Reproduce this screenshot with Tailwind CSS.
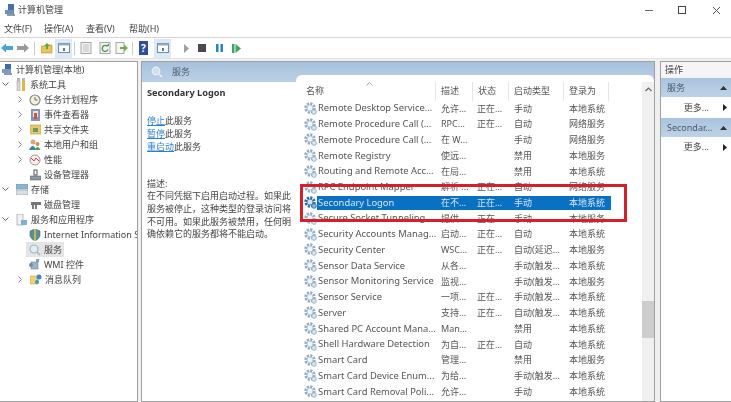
<!DOCTYPE html>
<html lang="zh-CN">
<head>
  <meta charset="UTF-8" />
  <title>计算机管理</title>
  <script src="https://cdn.jsdelivr.net/npm/@tailwindcss/browser@4"></script>
</head>
<body class="w-[731px] h-[402px] overflow-hidden bg-white text-[#333] text-[9px] font-['Noto_Sans','Noto_Sans_CJK_SC',sans-serif]">
  <svg class="hidden">
    <defs>
      <g id="gear">
        <circle cx="6" cy="6" r="4.400" fill="none" stroke="#8fadc4" stroke-width="2.600" stroke-dasharray="2.200 1.200"/>
        <circle cx="6" cy="6" r="3" fill="#eef4f8" stroke="#a9bfd0" stroke-width=".8"/>
        <circle cx="10" cy="10" r="2.300" fill="#dbe7f0" stroke="#8fadc4" stroke-width=".9"/>
      </g>
      <g id="gear-on">
        <circle cx="6" cy="6" r="4.400" fill="none" stroke="#2f6ea5" stroke-width="2.600" stroke-dasharray="2.200 1.200"/>
        <circle cx="6" cy="6" r="3" fill="#cfe2f1" stroke="#2f6ea5" stroke-width=".8"/>
        <circle cx="10" cy="10" r="2.300" fill="#8db8da" stroke="#2f6ea5" stroke-width=".9"/>
      </g>
    </defs>
  </svg>

  <div class="relative w-[731px] h-[402px] overflow-hidden blur-[0.5px]">
    <!-- Title bar -->
    <header class="flex items-center h-[20px] pl-[5px]">
      <svg width="11" height="13" viewBox="0 0 11 13"><rect x="3" y="0" width="6" height="6" fill="#4a6fa5"/><rect x="0" y="6" width="9" height="4" fill="#6d8fb3"/><rect x="2" y="10" width="8" height="2" fill="#8a9bb0"/></svg>
      <span class="ml-[2px] text-[#444]">计算机管理</span>
      <div class="ml-auto flex items-center">
        <span class="w-[8px] h-px bg-[#666] mr-[25px]"></span>
        <span class="w-[8px] h-[8px] border border-[#444] mr-[26px]"></span>
        <svg class="mr-[10px]" width="9" height="9" viewBox="0 0 9 9"><path d="M1 1l7 7M8 1l-7 7" stroke="#555" stroke-width="1"/></svg>
      </div>
    </header>

    <!-- Menu -->
    <nav class="flex h-[18px] items-center pl-[4px] pt-[1px] text-[#444] border-b border-[#d5d5d5]">
      <span class="w-[40px]">文件(F)</span>
      <span class="w-[42px]">操作(A)</span>
      <span class="w-[43px]">查看(V)</span>
      <span>帮助(H)</span>
    </nav>

    <!-- Toolbar -->
    <div class="flex items-center h-[20px] text-[#777]">
      <svg class="ml-[1px]" width="12" height="10" viewBox="0 0 12 10"><path d="M0 5l5-4.500v2.500h7v4h-7v2.500z" fill="#4aa3d8"/></svg>
      <svg class="ml-[4px]" width="12" height="10" viewBox="0 0 12 10"><path d="M12 5l-5-4.500v2.500h-7v4h7v2.500z" fill="#9a9a9a"/></svg>
      <span class="ml-[5px] w-px h-[13px] bg-[#ccc]"></span>
      <svg class="ml-[6px]" width="12" height="12" viewBox="0 0 12 12"><path d="M0 4h5l1-1h5v8h-11z" fill="#e7c65c" stroke="#b58d2a" stroke-width=".6"/><path d="M6 1l3 3h-2v3h-2v-3h-2z" fill="#5aa84c"/></svg>
      <span class="ml-[2px] w-[17px] h-[19px] bg-[#dce8f3] flex items-center justify-center"><svg width="12" height="10" viewBox="0 0 12 10"><rect x=".5" y=".5" width="11" height="9" fill="#fff" stroke="#6e8ca3"/><rect x=".5" y=".5" width="11" height="2" fill="#8fb0c9"/><rect x="5" y="5" width="2" height="3" fill="#5c7c92"/></svg></span>
      <span class="ml-[2px] w-px h-[13px] bg-[#ccc]"></span>
      <svg class="ml-[5px]" width="12" height="12" viewBox="0 0 12 12"><rect x="1" y=".5" width="10" height="11" fill="#f2f2f2" stroke="#a8a8a8"/><path d="M3 3h6M3 5h6M3 7h6M3 9h6" stroke="#c0c0c0"/></svg>
      <svg class="ml-[7px]" width="12" height="12" viewBox="0 0 12 12"><rect x="1" y=".5" width="10" height="11" fill="#f4f4f4" stroke="#a8a8a8"/><path d="M8.500 4.500a3 3 0 1 0 .5 3" fill="none" stroke="#3e9c48" stroke-width="1.300"/><path d="M7 4h3v-2.500z" fill="#3e9c48"/></svg>
      <svg class="ml-[4px]" width="13" height="12" viewBox="0 0 13 12"><rect x="1" y=".5" width="8" height="11" fill="#f4f4f4" stroke="#a8a8a8"/><path d="M5 5h4v-2.500l4 3.500-4 3.500v-2.500h-4z" fill="#6cb04a"/></svg>
      <span class="ml-[4px] w-px h-[13px] bg-[#ccc]"></span>
      <span class="ml-[6px] w-[9px] h-[14px] bg-[#2e4f9e] text-white text-[10px] font-bold flex items-center justify-center">?</span>
      <span class="ml-[6px] w-[17px] h-[19px] bg-[#dce8f3] flex items-center justify-center"><svg width="12" height="10" viewBox="0 0 12 10"><rect x=".5" y=".5" width="11" height="9" fill="#fff" stroke="#6e8ca3"/><rect x=".5" y=".5" width="11" height="2" fill="#8fb0c9"/><rect x="5" y="5" width="2" height="3" fill="#5c7c92"/></svg></span>
      <svg class="ml-[12px]" width="7" height="9" viewBox="0 0 7 9"><path d="M1 0l5 4.500-5 4.500z" fill="#9aa0a4"/></svg>
      <span class="ml-[8px] w-[8px] h-[8px] bg-[#4a4a4a]"></span>
      <svg class="ml-[10px]" width="7" height="8" viewBox="0 0 7 8"><path d="M0 0h2.500v8h-2.500zM4.500 0h2.500v8h-2.500z" fill="#2f83c5"/></svg>
      <svg class="ml-[9px]" width="9" height="9" viewBox="0 0 9 9"><path d="M0 0h2.500v9h-2.500zM3.500 0l5.500 4.500-5.500 4.500z" fill="#3ea55a"/></svg>
    </div>

    <!-- Main area -->
    <div class="flex h-[344px] bg-[#f0f0f0] pt-[2px] border-t border-[#e3e3e3]">
      <!-- Tree -->
      <aside class="w-[138px] h-full bg-white border border-[#a0a0a0] border-l-0 text-[#444] leading-[15px] overflow-hidden">
        <div class="flex items-center h-[15px] pl-[2px]"><svg class="mr-[2px]" width="12" height="12" viewBox="0 0 12 12"><rect x="3" y="0" width="6" height="5" fill="#3f6aa3"/><rect x="0" y="5" width="9" height="4" fill="#7b9cbd"/><rect x="2" y="9" width="8" height="2" fill="#8a9bb0"/></svg>计算机管理(本地)</div>
        <div class="flex items-center h-[15px] pl-[2px]"><svg class="mr-[7px]" width="7" height="5" viewBox="0 0 7 5"><path d="M.5.500l3 3 3-3" fill="none" stroke="#666"/></svg><svg class="mr-[4px]" width="10" height="13" viewBox="0 0 10 13"><rect x="1" y="3" width="3" height="10" fill="#d7d7d7" stroke="#999" stroke-width=".5"/><rect x="6" y="3" width="3" height="10" fill="#e0b93e"/><path d="M1 0h3v3h-3zM6 0h3v3h-3z" fill="#b8b8b8"/></svg>系统工具</div>
        <div class="flex items-center h-[15px] pl-[18px]"><svg class="mr-[6px]" width="5" height="7" viewBox="0 0 5 7"><path d="M.5.500l3 3-3 3" fill="none" stroke="#888"/></svg><svg class="mr-[3px]" width="12" height="12" viewBox="0 0 12 12"><circle cx="6" cy="6" r="5" fill="#f3f0e2" stroke="#8c8c78" stroke-width="1.200"/><path d="M6 3v3h2.500" fill="none" stroke="#666"/></svg>任务计划程序</div>
        <div class="flex items-center h-[15px] pl-[18px]"><svg class="mr-[7px]" width="5" height="7" viewBox="0 0 5 7"><path d="M.5.500l3 3-3 3" fill="none" stroke="#888"/></svg><svg class="mr-[3px]" width="11" height="12" viewBox="0 0 11 12"><rect x="1" y="0" width="9" height="12" fill="#8d8fbc"/><rect x="3" y="2" width="5" height="6" fill="#f0e7c4"/><rect x="4" y="4" width="3" height="6" fill="#c0574e"/></svg>事件查看器</div>
        <div class="flex items-center h-[15px] pl-[18px]"><svg class="mr-[7px]" width="5" height="7" viewBox="0 0 5 7"><path d="M.5.500l3 3-3 3" fill="none" stroke="#888"/></svg><svg class="mr-[3px]" width="11" height="11" viewBox="0 0 11 11"><rect x="0" y="1" width="11" height="9" fill="#e8c96a" stroke="#b9983c" stroke-width=".6"/><rect x="3" y="4" width="5" height="4" fill="#6c9a5a"/></svg>共享文件夹</div>
        <div class="flex items-center h-[15px] pl-[18px]"><svg class="mr-[6px]" width="5" height="7" viewBox="0 0 5 7"><path d="M.5.500l3 3-3 3" fill="none" stroke="#888"/></svg><svg class="mr-[3px]" width="12" height="12" viewBox="0 0 12 12"><circle cx="4" cy="3" r="2.500" fill="#d9a877"/><path d="M0 11q4-8 7 0z" fill="#3a7cb8"/><circle cx="8.500" cy="5" r="2" fill="#c58f62"/><path d="M5.500 11q3-6 6 0z" fill="#4c9b59"/></svg>本地用户和组</div>
        <div class="flex items-center h-[15px] pl-[18px]"><svg class="mr-[6px]" width="5" height="7" viewBox="0 0 5 7"><path d="M.5.500l3 3-3 3" fill="none" stroke="#888"/></svg><svg class="mr-[3px]" width="12" height="12" viewBox="0 0 12 12"><circle cx="6" cy="6" r="5" fill="#f6f0ee" stroke="#b98a8a"/><path d="M2 4l3 3 2-3 3 3" fill="none" stroke="#c8404a"/></svg>性能</div>
        <div class="flex items-center h-[15px] pl-[30px]"><svg class="mr-[3px]" width="11" height="12" viewBox="0 0 11 12"><rect x="4" y="1" width="3" height="5" fill="none" stroke="#555"/><rect x="0" y="7" width="11" height="4" fill="#8d99a5" stroke="#555" stroke-width=".5"/></svg>设备管理器</div>
        <div class="flex items-center h-[15px] pl-[2px]"><svg class="mr-[7px]" width="7" height="5" viewBox="0 0 7 5"><path d="M.5.500l3 3 3-3" fill="none" stroke="#666"/></svg><svg class="mr-[3px]" width="12" height="11" viewBox="0 0 12 11"><rect x="0" y="0" width="12" height="5" fill="#8bb4cf" stroke="#7b8b99" stroke-width=".5"/><rect x="0" y="6" width="12" height="5" fill="#d7dfe6" stroke="#7b8b99" stroke-width=".5"/></svg>存储</div>
        <div class="flex items-center h-[15px] pl-[30px]"><svg class="mr-[2px]" width="12" height="10" viewBox="0 0 12 10"><path d="M1 2h10v3h-10z" fill="#777"/><path d="M3 5v4M6 5v4" stroke="#555" stroke-width="1.500"/></svg>磁盘管理</div>
        <div class="flex items-center h-[15px] pl-[2px]"><svg class="mr-[7px]" width="7" height="5" viewBox="0 0 7 5"><path d="M.5.500l3 3 3-3" fill="none" stroke="#666"/></svg><svg class="mr-[4px]" width="11" height="12" viewBox="0 0 11 12"><rect x="1" y="0" width="6" height="11" fill="#f1f1f1" stroke="#9aa3aa" stroke-width=".7"/><rect x="5" y="6" width="6" height="5" fill="#7fb0d2"/></svg>服务和应用程序</div>
        <div class="flex items-center h-[15px] pl-[29px] whitespace-nowrap"><svg class="mr-[3px] shrink-0" width="12" height="12" viewBox="0 0 12 12"><path d="M1 2l5-2 5 2v5q-1 3-5 5-4-2-5-5z" fill="#5f8f86" stroke="#3e6a8a" stroke-width=".6"/><path d="M6 0v12" stroke="#d6c46c" stroke-width="1.500"/></svg>Internet Information S</div>
        <div class="flex items-center h-[15px] pl-[26px]"><span class="flex items-center h-[15px] bg-[#e4e4e4] pl-[3px] pr-[2px]"><svg class="mr-[3px]" width="12" height="12" viewBox="0 0 12 12"><circle cx="5" cy="5" r="4" fill="#e2edf3" stroke="#9fb9c9" stroke-width="1.200"/><path d="M8 8l3 3" stroke="#9fb9c9" stroke-width="1.500"/></svg>服务</span></div>
        <div class="flex items-center h-[15px] pl-[28px]"><svg class="mr-[3px]" width="13" height="11" viewBox="0 0 13 11"><rect x="3" y="3" width="7" height="7" fill="#9db5c6" stroke="#6f8697" stroke-width=".6"/><circle cx="3" cy="6" r="2" fill="#6f8fa8"/><path d="M8 0h3v3h-3z" fill="#7aa3c4"/></svg>WMI 控件</div>
        <div class="flex items-center h-[15px] pl-[18px]"><svg class="mr-[7px]" width="5" height="7" viewBox="0 0 5 7"><path d="M.5.500l3 3-3 3" fill="none" stroke="#888"/></svg><svg class="mr-[3px]" width="12" height="11" viewBox="0 0 12 11"><rect x="0" y="2" width="8" height="8" fill="#efd274" stroke="#b9983c" stroke-width=".5"/><circle cx="9" cy="3" r="2.500" fill="#3c86c6"/><circle cx="7" cy="8" r="2" fill="#3c9bb8"/></svg>消息队列</div>
      </aside>

      <!-- Centre panel -->
      <section class="ml-[3px] w-[514px] h-full bg-white border border-[#a0a0a0] flex flex-col">
        <div class="h-[20px] shrink-0 bg-gradient-to-b from-[#a6c1dd] to-[#bcd0e5] flex items-center pl-[9px] text-[#54616e]">
          <svg class="mr-[9px]" width="12" height="12" viewBox="0 0 12 12"><circle cx="5" cy="5" r="3.800" fill="#d2e0ec" stroke="#e8f0f6" stroke-width="1.200"/><path d="M8 8l3 3" stroke="#e8f0f6" stroke-width="1.500"/></svg>服务
        </div>
        <div class="flex flex-1 min-h-0 relative">
          <!-- Description -->
          <div class="w-[154px] shrink-0 pl-[5px] pt-[4px] leading-[13px] text-[#444]">
            <p class="font-bold text-[#333] text-[9.200px]">Secondary Logon</p>
            <p class="mt-[15px]"><span class="text-[#2d7fd0] underline">停止</span>此服务</p>
            <p><span class="text-[#2d7fd0] underline">暂停</span>此服务</p>
            <p><span class="text-[#2d7fd0] underline">重启动</span>此服务</p>
            <p class="mt-[24px]">描述:</p>
            <p class="w-[146px] leading-[12.750px]">在不同凭据下启用启动过程。如果此服务被停止，这种类型的登录访问将不可用。如果此服务被禁用，任何明确依赖它的服务都将不能启动。</p>
          </div>
          <!-- Service list -->
          <div class="flex-1 min-w-0 relative">
            <div class="absolute -top-[7px] left-0 right-0 h-[8px] bg-white rounded-t-[6px]"></div>
            <div class="relative flex h-[18.500px] text-[#555] leading-[17px]">
              <span class="w-[140px] pl-[10px] border-r border-[#e5e5e5] relative">名称<svg class="absolute left-[70px] top-0" width="7" height="4" viewBox="0 0 7 4"><path d="M.5 3.500l3-3 3 3" fill="none" stroke="#aaa"/></svg></span>
              <span class="w-[37px] pl-[5px] border-r border-[#e5e5e5]">描述</span>
              <span class="w-[36px] pl-[5px] border-r border-[#e5e5e5]">状态</span>
              <span class="w-[55px] pl-[5px] border-r border-[#e5e5e5]">启动类型</span>
              <span class="w-[45px] pl-[5px] border-r border-[#e5e5e5]">登录为</span>
            </div>
            <div id="service-list" class="text-[#555]"></div>
            <!-- Scrollbar -->
            <div class="absolute top-0 bottom-0 right-0 w-[12px] bg-[#f0f0f0]">
              <svg class="absolute top-[5px] left-[3px]" width="7" height="5" viewBox="0 0 7 5"><path d="M.5 4l3-3 3 3" fill="none" stroke="#666" stroke-width="1.200"/></svg>
              <div class="absolute top-[219px] left-0 w-[12px] h-[37px] bg-[#cdcdcd]"></div>
            </div>
          </div>
        </div>
      </section>

      <!-- Actions panel -->
      <aside class="ml-[5px] flex-1 h-full bg-white border border-[#a0a0a0] border-r-0 text-[#444]">
        <div class="h-[16px] pl-[4px] leading-[15px] bg-[#f5f5f5]">操作</div>
        <div class="h-[19px] flex items-center justify-between pl-[6px] pr-[4px] bg-gradient-to-b from-[#a9c4df] to-[#bed2e6] text-[#4a5a6a]">服务<svg width="7" height="4" viewBox="0 0 7 4"><path d="M0 4l3.500-4 3.500 4z" fill="#333"/></svg></div>
        <div class="h-[21px] flex items-center justify-end pr-[4px]">更多...<svg class="ml-[14px]" width="4" height="7" viewBox="0 0 4 7"><path d="M0 0l4 3.500-4 3.500z" fill="#222"/></svg></div>
        <div class="h-[19px] flex items-center justify-between pl-[6px] pr-[4px] bg-gradient-to-b from-[#a9c4df] to-[#bed2e6] text-[#4a5a6a]">Secondar...<svg width="7" height="4" viewBox="0 0 7 4"><path d="M0 4l3.500-4 3.500 4z" fill="#333"/></svg></div>
        <div class="h-[20px] flex items-center justify-end pr-[4px]">更多...<svg class="ml-[14px]" width="4" height="7" viewBox="0 0 4 7"><path d="M0 0l4 3.500-4 3.500z" fill="#222"/></svg></div>
      </aside>
    </div>

    <!-- Red callout drawn over the list -->
    <div class="absolute left-[300px] top-[184px] w-[327px] h-[38px] border-[3px] border-[#d4202c]"></div>
  </div>

  <script>
    const services = [
      ["Remote Desktop Service...", "允许...", "正在...", "手动", "本地系统"],
      ["Remote Procedure Call (...", "RPC...", "正在...", "自动", "网络服务"],
      ["Remote Procedure Call (...", "在 W...", "", "手动", "网络服务"],
      ["Remote Registry", "使远...", "", "禁用", "本地服务"],
      ["Routing and Remote Acc...", "在局...", "", "禁用", "本地系统"],
      ["RPC Endpoint Mapper", "解析 ...", "正在...", "自动", "网络服务"],
      ["Secondary Logon", "在不...", "正在...", "手动", "本地系统"],
      ["Secure Socket Tunneling...", "提供...", "正在...", "手动", "本地服务"],
      ["Security Accounts Manag...", "启动...", "正在...", "自动", "本地系统"],
      ["Security Center", "WSC...", "正在...", "自动(延迟...", "本地服务"],
      ["Sensor Data Service", "从各...", "", "手动(触发...", "本地系统"],
      ["Sensor Monitoring Service", "监视...", "", "手动(触发...", "本地服务"],
      ["Sensor Service", "一项...", "正在...", "手动(触发...", "本地系统"],
      ["Server", "支持...", "正在...", "自动(触发...", "本地系统"],
      ["Shared PC Account Mana...", "Man...", "", "禁用", "本地系统"],
      ["Shell Hardware Detection", "为自...", "正在...", "自动", "本地系统"],
      ["Smart Card", "管理...", "", "禁用", "本地服务"],
      ["Smart Card Device Enum...", "为给...", "", "手动(触发...", "本地系统"],
      ["Smart Card Removal Poli...", "允许...", "", "手动", "本地系统"]
    ];

    document.getElementById("service-list").innerHTML = services.map((s) => {
      const selected = s[0] === "Secondary Logon";
      return `
        <div class="flex items-center h-[15.740px]">
          <svg class="ml-[8px] shrink-0" width="13" height="13"><use href="#${selected ? "gear-on" : "gear"}"/></svg>
          <div class="flex items-center h-[14.500px] w-[294px] pl-[1px] ${selected ? "bg-[#0a70c2] text-[#d7e6f2]" : ""}">
            <span class="w-[123px] shrink-0 whitespace-nowrap overflow-hidden text-[9.400px]">${s[0]}</span>
            <span class="w-[36px] shrink-0 whitespace-nowrap">${s[1]}</span>
            <span class="w-[37px] shrink-0 whitespace-nowrap">${s[2]}</span>
            <span class="w-[55px] shrink-0 whitespace-nowrap">${s[3]}</span>
            <span class="whitespace-nowrap">${s[4]}</span>
          </div>
        </div>`;
    }).join("");
  </script>
</body>
</html>
